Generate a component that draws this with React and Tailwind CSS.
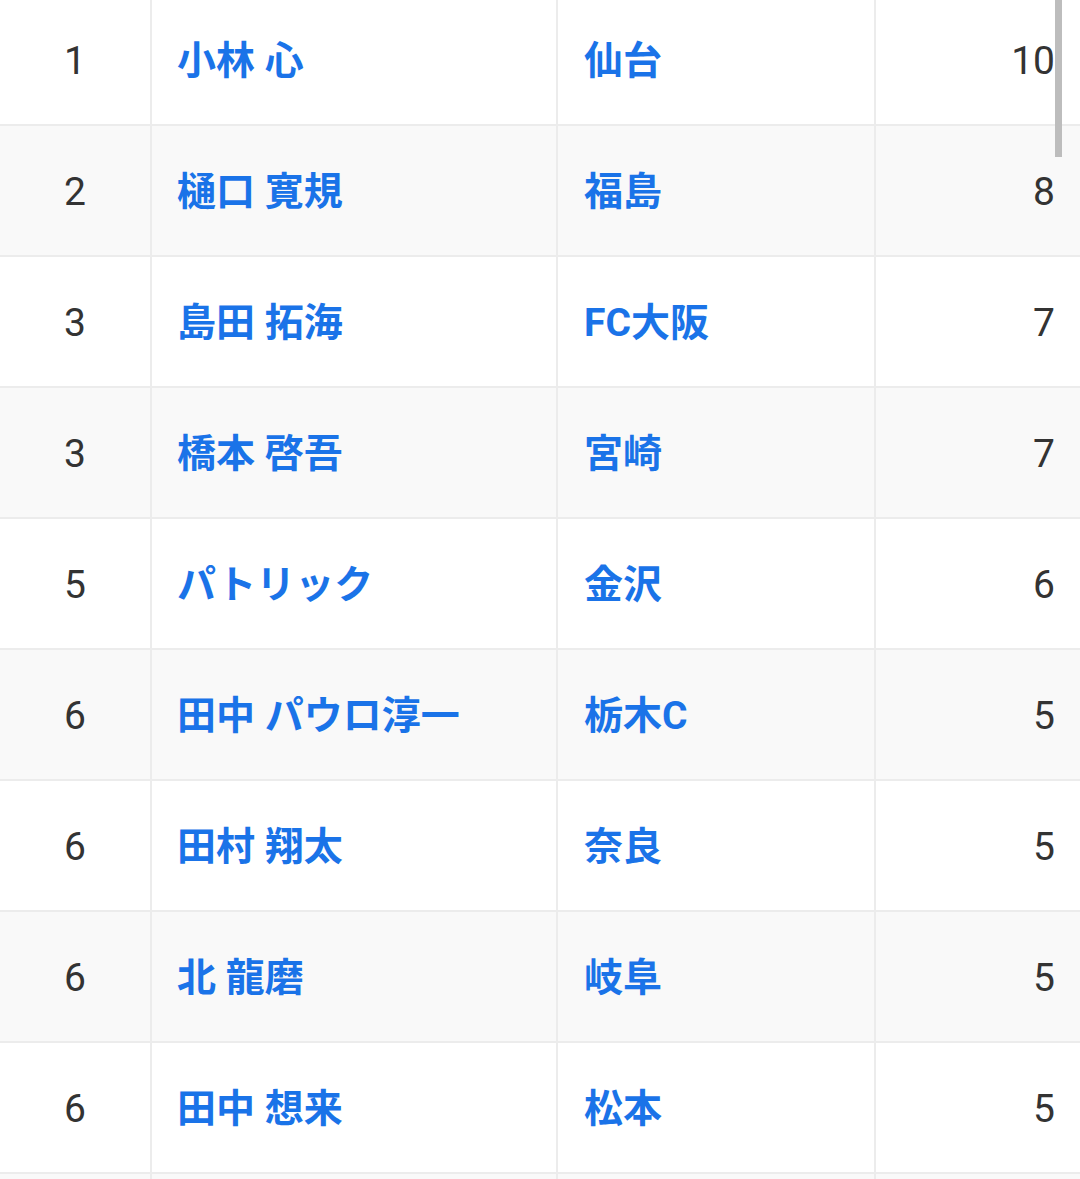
import React from "react";

const rows = [
  { rank: "1", name: "小林 心", team: "仙台", goals: "10" },
  { rank: "2", name: "樋口 寛規", team: "福島", goals: "8" },
  { rank: "3", name: "島田 拓海", team: "FC大阪", goals: "7" },
  { rank: "3", name: "橋本 啓吾", team: "宮崎", goals: "7" },
  { rank: "5", name: "パトリック", team: "金沢", goals: "6" },
  { rank: "6", name: "田中 パウロ淳一", team: "栃木C", goals: "5" },
  { rank: "6", name: "田村 翔太", team: "奈良", goals: "5" },
  { rank: "6", name: "北 龍磨", team: "岐阜", goals: "5" },
  { rank: "6", name: "田中 想来", team: "松本", goals: "5" },
  { rank: "", name: "", team: "", goals: "" },
];

const App = () => {
  return (
    <div className="relative w-[1080px] h-[1179px] overflow-hidden bg-white font-['Roboto','Noto_Sans_CJK_JP',sans-serif]">
      <div className="-mt-[5px] flex flex-col">
        {rows.map((r, i) => (
          <div
            key={i}
            className={`grid grid-cols-[152px_406px_318px_1fr] h-[131px] border-b-2 border-[#ececec] ${
              i % 2 === 1 ? "bg-[#f9f9f9]" : "bg-white"
            }`}
          >
            <div className="flex items-center justify-center pt-[3px] border-r-2 border-[#ececec] text-[39px] text-[#333]">
              {r.rank}
            </div>
            <div className="flex items-center pl-[25px] pt-[3px] border-r-2 border-[#ececec] text-[39px] font-bold text-[#1a73e8]">
              {r.name}
            </div>
            <div className="flex items-center pl-[26px] pt-[3px] border-r-2 border-[#ececec] text-[39px] font-bold text-[#1a73e8]">
              {r.team}
            </div>
            <div className="flex items-center justify-end pr-[25px] pt-[3px] text-[39px] text-[#333]">
              {r.goals}
            </div>
          </div>
        ))}
      </div>
      <div className="absolute top-0 right-[18px] w-[7px] h-[157px] bg-[#bdbdbd]" />
    </div>
  );
};

export default App;
